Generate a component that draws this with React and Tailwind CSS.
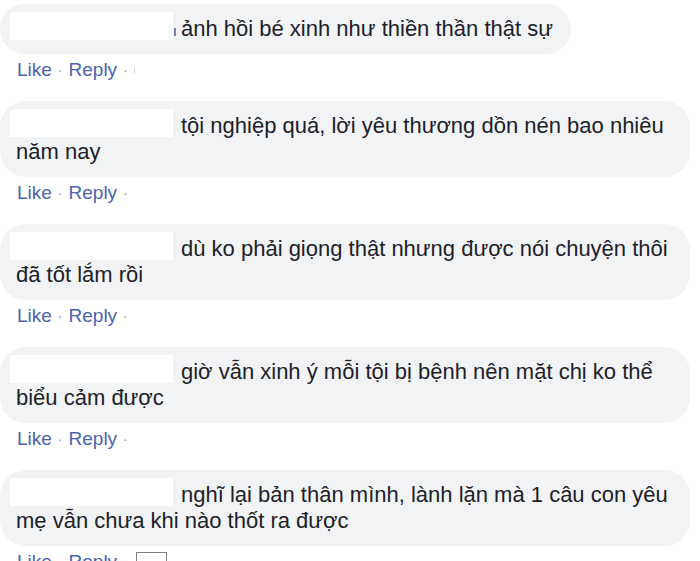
import React from 'react';

// Danh sách bình luận (tên người dùng đã bị che bằng ô trắng)
const comments = [
  { lines: ['ảnh hồi bé xinh như thiền thần thật sự'], mark: true, extra: 'tick' },
  { lines: ['tội nghiệp quá, lời yêu thương dồn nén bao nhiêu', 'năm nay'] },
  { lines: ['dù ko phải giọng thật nhưng được nói chuyện thôi', 'đã tốt lắm rồi'] },
  { lines: ['giờ vẫn xinh ý mỗi tội bị bệnh nên mặt chị ko thể', 'biểu cảm được'] },
  { lines: ['nghĩ lại bản thân mình, lành lặn mà 1 câu con yêu', 'mẹ vẫn chưa khi nào thốt ra được'], extra: 'box' },
];

const Comment = ({ lines, mark, extra }) => {
  const multi = lines.length > 1;
  return (
    <div className="flex flex-col items-start">
      {/* Bong bóng bình luận */}
      <div
        className={`bg-[#f2f3f5] rounded-[26px] pl-4 pr-[18px] py-3 text-[22px] leading-[26px] text-[#1d2129] ${
          multi ? 'w-[690px]' : 'w-fit'
        }`}
      >
        <span className="inline-block -ml-[6px] mr-[8px] w-[163px] h-[26px] align-top relative">
          <span className="absolute inset-x-0 -top-[4px] h-[28px] bg-white" />
          {mark && <span className="absolute right-[-3px] top-[12px] w-[2px] h-[8px] bg-[#6f86c4]" />}
        </span>
        {lines[0]}
        {multi && (
          <>
            <br />
            {lines[1]}
          </>
        )}
      </div>

      {/* Hàng Like · Reply */}
      <div className="mt-[5px] mb-[20px] ml-[17px] flex items-center h-[22px] text-[19px] leading-[22px] text-[#4a64ad]">
        <span>Like</span>
        <span className="mx-[6px] text-[#90949c] text-[14px]">·</span>
        <span>Reply</span>
        <span className="mx-[6px] text-[#90949c] text-[14px]">·</span>
        {extra === 'tick' && <span className="w-[1px] h-[7px] bg-[#d5d7dc]" />}
        {extra === 'box' && <span className="ml-[2px] mt-[2px] w-[31px] h-[22px] border border-[#7b7f86]" />}
      </div>
    </div>
  );
};

export default function App() {
  return (
    <div
      className="w-[700px] h-[561px] overflow-hidden bg-white pt-[4px]"
      style={{ fontFamily: '"Liberation Sans", Arial, sans-serif' }}
    >
      {comments.map((c, i) => (
        <Comment key={i} {...c} />
      ))}
    </div>
  );
}
